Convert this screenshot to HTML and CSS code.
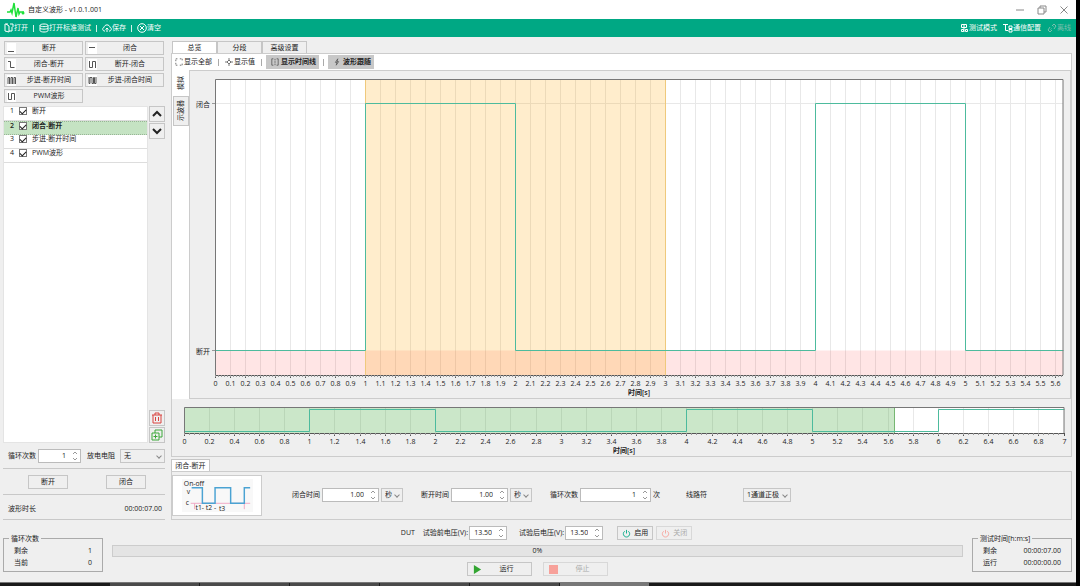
FILE: index.html
```html
<!doctype html>
<html lang="zh-CN">
    <head>
        <meta charset="utf-8" />
        <title>自定义波形 - v1.0.1.001</title>
        <link rel="stylesheet" href="styles.css">
    </head>

    <body>
        <header class="titlebar">
            <svg class="logo" viewBox="0 0 18 16">
                <path d="M0 10h3l1-2 1 3L7 1l2 14 2-9 1 6 1-2h4" />
                <circle cx="16" cy="11" r="1.5" />
            </svg>
            <h1>自定义波形 - v1.0.1.001</h1>
            <div class="window-buttons">
                <button aria-label="最小化">
                    <svg viewBox="0 0 10 10"><path d="M1 5h8" /></svg>
                </button>
                <button aria-label="还原">
                    <svg viewBox="0 0 10 10">
                        <path d="M1 3h6v6H1zM3 3V1h6v6H7" />
                    </svg>
                </button>
                <button aria-label="关闭">
                    <svg viewBox="0 0 10 10"><path d="M1.5 1.5l7 7M8.5 1.5l-7 7" /></svg>
                </button>
            </div>
        </header>

        <nav class="toolbar">
            <button>
                <svg viewBox="0 0 10 10"><path d="M4 1H1v7l4 1V3L2 1M5 8h3V4M6 1h3v3" /></svg>打开
            </button>
            <i></i>
            <button>
                <svg viewBox="0 0 10 10">
                    <path d="M1 2.5C1 .5 9 .5 9 2.5v5C9 9.5 1 9.5 1 7.5zM1 2.5C1 4 9 4 9 2.5M1 5c0 1.5 8 1.5 8 0" />
                </svg>打开标准测试
            </button>
            <i></i>
            <button>
                <svg viewBox="0 0 10 10"><path d="M3 8H2C0 7 .5 4.5 2 4.5 2.5 1 7.5 1 8 4.5c1.5 0 2 2.5 0 3.5H7M5 9V5M3.5 6.5L5 5l1.5 1.5" /></svg>保存
            </button>
            <i></i>
            <button>
                <svg viewBox="0 0 10 10"><circle cx="5" cy="5" r="4.3" /><path d="M3 3l4 4M7 3L3 7" /></svg>清空
            </button>
            <div class="toolbar-right">
                <button>
                    <svg viewBox="0 0 10 10"><path d="M2.5 1.5h5v3h-5zM5 1v8M2.5 6.5h2v2h-2zM6.5 6.5h2v2h-2z" /></svg>测试模式
                </button>
                <button>
                    <svg viewBox="0 0 10 10"><path d="M0 1.5h5M2.5 1.5v6H5M6 3h3v2.5H6zM6 6.5h3V9H6z" /></svg>通信配置
                </button>
                <button disabled>
                    <svg viewBox="0 0 10 10"><path d="M5 3l2-2 2 2-2 3M5 7L3 9 1 7l2-3M3.5 6.5l1-1M6 4l.5-.5" /></svg>离线
                </button>
            </div>
        </nav>

        <main>
            <aside class="sidebar">
                <div class="wave-buttons">
                    <button><svg viewBox="0 0 9 11"><path d="M1 8.5h6" /></svg><span>断开</span></button>
                    <button><svg viewBox="0 0 9 11"><path d="M1 4.5h6" /></svg><span>闭合</span></button>
                    <button><svg viewBox="0 0 9 11"><path d="M1 2.5h2.5v6h4" /></svg><span>闭合-断开</span></button>
                    <button><svg viewBox="0 0 9 11"><path d="M1.5 2v6.5h3v-6h3V9" /></svg><span>断开-闭合</span></button>
                    <button><svg viewBox="0 0 9 11"><path d="M1 9V2.5h1.5V9M4 9V2.5h1.5V9M7 9V2.5h1.5V9" /></svg><span>步进-断开时间</span></button>
                    <button><svg viewBox="0 0 9 11"><path d="M1 2v6.5h1V2.5h2v6h1.5v-6h1v6h1.5V2" /></svg><span>步进-闭合时间</span></button>
                    <button><svg viewBox="0 0 9 11"><path d="M1.5 2v6.5h3v-6h3V9" /></svg><span>PWM波形</span></button>
                </div>

                <div class="list-area">
                    <ol class="wave-list">
                        <li><span>1</span><input type="checkbox" id="w1" checked /><label for="w1">断开</label></li>
                        <li class="selected"><span>2</span><input type="checkbox" id="w2" checked /><label for="w2">闭合-断开</label></li>
                        <li><span>3</span><input type="checkbox" id="w3" checked /><label for="w3">步进-断开时间</label></li>
                        <li><span>4</span><input type="checkbox" id="w4" checked /><label for="w4">PWM波形</label></li>
                    </ol>
                    <div class="list-tools">
                        <button aria-label="上移"><svg viewBox="0 0 12 12"><path d="M2 8l4-4 4 4" /></svg></button>
                        <button aria-label="下移"><svg viewBox="0 0 12 12"><path d="M2 4l4 4 4-4" /></svg></button>
                        <button class="delete" aria-label="删除">
                            <svg viewBox="0 0 12 12"><path d="M1 3h10M4 3V1h4v2M2 3v8h8V3M4.5 5v4M7.5 5v4" /></svg>
                        </button>
                        <button class="copy" aria-label="复制">
                            <svg viewBox="0 0 12 12"><path d="M1 4h7v7H1zM4 4V1h7v7H8M4.5 5.5v4M2.5 7.5h4" /></svg>
                        </button>
                    </div>
                </div>

                <div class="cycle-row">
                    <label for="cycles">循环次数</label>
                    <div class="spin"><input type="number" id="cycles" value="1" /><svg viewBox="0 0 6 12"><path d="M1 4l2-2 2 2M1 8l2 2 2-2" /></svg></div>
                    <label for="resistor">放电电阻</label>
                    <div class="select"><select id="resistor"><option>无</option></select></div>
                </div>
                <div class="switch-row">
                    <button>断开</button>
                    <button>闭合</button>
                </div>
                <div class="duration-row">
                    <span>波形时长</span>
                    <span>00:00:07.00</span>
                </div>
            </aside>

            <section class="content">
                <div class="tabs">
                    <button class="active">总览</button>
                    <button>分段</button>
                    <button>高级设置</button>
                </div>
                <div class="overview">
                    <div class="view-tools">
                        <button><svg viewBox="0 0 10 10"><path stroke-dasharray="2 1" d="M1 4V1h3M6 1h3v3M1 6v3h3M6 9h3V6" /></svg>显示全部</button>
                        <i></i>
                        <button><svg viewBox="0 0 10 10"><path d="M5 0v3M5 7v3M0 5h3M7 5h3M5 2.5L7.5 5 5 7.5 2.5 5z" /></svg>显示值</button>
                        <i></i>
                        <button class="on"><svg viewBox="0 0 10 10"><path d="M3 1H1v8h2M7 1h2v8H7M5 1v2M5 4v2M5 7v2" /></svg>显示时间线</button>
                        <i></i>
                        <button class="on"><svg viewBox="0 0 10 10"><path d="M6 1L3 5.5h2L4 9l3-4.5H5z" /></svg>波形跟随</button>
                    </div>
                    <div class="scope">
                        <div class="side-tabs">
                            <button class="active">模拟</button>
                            <button>示波器</button>
                        </div>
                        <svg class="chart" id="mainChart"></svg>
                    </div>
                    <svg class="chart-overview" id="overviewChart"></svg>
                </div>

                <div class="tabs segment-tabs">
                    <button class="active">闭合-断开</button>
                </div>
                <div class="segment">
                    <svg class="preview" viewBox="0 0 90 40">
                        <rect x="9" y="3" width="73" height="34" />
                        <path class="base" d="M18 28h61M73 28v6M22 28v6" />
                        <path class="wave" d="M19 12h11v16h13V12h16v16h14V12h6" />
                        <text x="11" y="10">On-off</text>
                        <text x="14" y="18">v</text>
                        <text x="13" y="30">c</text>
                        <text x="23" y="35">t1- t2 -</text>
                        <text x="47" y="36">t3</text>
                    </svg>
                    <div class="fields">
                        <div class="field">
                            <label for="closeTime">闭合时间</label>
                            <div class="spin wide"><input type="number" id="closeTime" step="0.01" value="1.00" /><svg viewBox="0 0 6 12"><path d="M1 4l2-2 2 2M1 8l2 2 2-2" /></svg></div>
                            <div class="select unit"><select aria-label="闭合时间单位"><option>秒</option></select></div>
                        </div>
                        <div class="field">
                            <label for="openTime">断开时间</label>
                            <div class="spin wide"><input type="number" id="openTime" step="0.01" value="1.00" /><svg viewBox="0 0 6 12"><path d="M1 4l2-2 2 2M1 8l2 2 2-2" /></svg></div>
                            <div class="select unit"><select aria-label="断开时间单位"><option>秒</option></select></div>
                        </div>
                        <div class="field">
                            <label for="segCycles">循环次数</label>
                            <div class="spin widest"><input type="number" id="segCycles" value="1" /><svg viewBox="0 0 6 12"><path d="M1 4l2-2 2 2M1 8l2 2 2-2" /></svg></div>
                            <span>次</span>
                        </div>
                        <div class="field">
                            <label class="line-label" for="line">线路符</label>
                            <div class="select"><select id="line"><option>1通道正极</option></select></div>
                        </div>
                    </div>
                </div>
            </section>
        </main>

        <footer>
            <fieldset>
                <legend>循环次数</legend>
                <p><span>剩余</span><span>1</span></p>
                <p><span>当前</span><span>0</span></p>
            </fieldset>

            <div class="run-area">
                <div class="dut-row">
                    <span>DUT</span>
                    <div class="dut-field">
                        <label for="vBefore">试验前电压(V):</label>
                        <div class="spin"><input type="number" id="vBefore" step="0.01" value="13.50" /><svg viewBox="0 0 6 12"><path d="M1 4l2-2 2 2M1 8l2 2 2-2" /></svg></div>
                    </div>
                    <div class="dut-field after">
                        <label for="vAfter">试验后电压(V):</label>
                        <div class="spin"><input type="number" id="vAfter" step="0.01" value="13.50" /><svg viewBox="0 0 6 12"><path d="M1 4l2-2 2 2M1 8l2 2 2-2" /></svg></div>
                    </div>
                    <button class="power"><svg viewBox="0 0 10 10"><path d="M5 1v4M3 2.5a3.5 3.5 0 1 0 4 0" /></svg>启用</button>
                    <button class="power off" disabled><svg viewBox="0 0 10 10"><path d="M5 1v4M3 2.5a3.5 3.5 0 1 0 4 0" /></svg>关闭</button>
                </div>
                <div class="progress" role="progressbar" aria-valuenow="0">0%</div>
                <div class="run-row">
                    <button><svg viewBox="0 0 10 10"><path fill="#33a532" d="M1 0l8 5-8 5z" /></svg><span>运行</span></button>
                    <button disabled><svg viewBox="0 0 10 10"><path fill="#f7a19a" d="M0 0h10v10H0z" /></svg><span>停止</span></button>
                </div>
            </div>

            <fieldset>
                <legend>测试时间[h:m:s]</legend>
                <p><span>剩余</span><span>00:00:07.00</span></p>
                <p><span>运行</span><span>00:00:00.00</span></p>
            </fieldset>
        </footer>

        <div class="taskbar">
            <i></i><i></i><i></i><i></i><i></i><i class="current"></i>
        </div>

        <script src="charts.js"></script>
    </body>
</html>
```

FILE: styles.css
```css
* {
    box-sizing: border-box;
}
body {
    display: flex;
    flex-direction: column;
    min-height: 100vh;
    margin: 0;
    border-right: 4px solid #000;
    background: #efefef;
    color: #222;
    font: 7px/10px "Open Sans", "Noto Sans CJK SC", sans-serif;
}
button,
input,
select {
    margin: 0;
    padding: 0;
    border: 1px solid #c6c6c6;
    border-radius: 0;
    background: #efefef;
    color: inherit;
    font: inherit;
}
svg {
    flex: none;
    fill: none;
    stroke: currentColor;
}

/* title bar */
.titlebar {
    display: flex;
    align-items: center;
    height: 19px;
    padding: 0 7px;
    background: #fff;
}
.logo {
    width: 18px;
    height: 16px;
    color: #1fe03a;
    stroke-width: 1.5;
}
.logo circle {
    fill: #1fe03a;
    stroke: none;
}
h1 {
    flex: 1;
    margin: 0 0 0 3px;
    font-size: 7px;
    font-weight: 400;
}
.window-buttons {
    display: flex;
    gap: 12px;
}
.window-buttons button {
    width: 10px;
    height: 10px;
    border: 0;
    background: none;
    color: #888;
}
.window-buttons svg {
    display: block;
    width: 10px;
    height: 10px;
}

/* green toolbar */
.toolbar {
    display: flex;
    align-items: center;
    height: 18px;
    padding: 0 5px 0 4px;
    background: #00a884;
    color: #fff;
}
.toolbar button {
    display: flex;
    align-items: center;
    border: 0;
    background: none;
}
.toolbar svg {
    width: 10px;
    height: 10px;
}
.toolbar > i {
    width: 1px;
    height: 7px;
    margin: 0 5px;
    background: #d5f2ea;
}
.toolbar-right {
    display: flex;
    gap: 6px;
    margin-left: auto;
}
.toolbar button:disabled {
    color: #7dbfae;
}

main {
    display: flex;
    flex: 1;
    gap: 6px;
    padding: 4px 4px 0 3px;
}

/* left side */
.sidebar {
    display: flex;
    flex-direction: column;
    width: 162px;
}
.wave-buttons {
    display: grid;
    grid-template-columns: 1fr 1fr;
    gap: 2px;
    padding: 0 1px;
}
.wave-buttons button {
    display: flex;
    align-items: center;
    height: 14px;
    padding-left: 2px;
}
.wave-buttons svg {
    width: 9px;
    height: 11px;
    background: #fff;
    color: #555;
}
.wave-buttons span {
    flex: 1;
    text-align: center;
}
.list-area {
    display: flex;
    flex: 1;
    gap: 1px;
    margin-top: 3px;
}
.wave-list {
    flex: 1;
    margin: 0;
    padding: 0;
    border: 1px solid #e4e4e4;
    background: #fff;
    list-style: none;
}
.wave-list li {
    display: flex;
    align-items: center;
    height: 14px;
    padding-bottom: 5px;
    border-bottom: 1px solid #ddd;
}
.wave-list li.selected {
    border-top: 1px dotted #98b596;
    border-bottom: 1px dotted #98b596;
    background: #c5e3c3;
    font-weight: 600;
}
.wave-list span {
    width: 15px;
    padding-right: 5px;
    text-align: right;
}
.wave-list label {
    margin-left: 5px;
}
.wave-list input {
    display: grid;
    place-items: center;
    width: 8px;
    height: 8px;
    border: 1px solid #777;
    background: #fff;
    appearance: none;
}
.wave-list input:checked::before {
    content: "";
    width: 5px;
    height: 3px;
    border: solid #222;
    border-width: 0 0 1px 1px;
    transform: rotate(-45deg);
}
.list-tools {
    display: flex;
    flex-direction: column;
    gap: 1px;
    width: 16px;
}
.list-tools button {
    display: grid;
    place-items: center;
    height: 16px;
}
.list-tools svg {
    width: 12px;
    height: 12px;
    stroke-width: 2;
}
.list-tools .delete {
    margin-top: auto;
    color: #d9433f;
}
.list-tools .copy {
    color: #3da83b;
}
.list-tools .delete svg,
.list-tools .copy svg {
    stroke-width: 1;
}
.cycle-row,
.switch-row,
.duration-row {
    display: flex;
    align-items: center;
    border-bottom: 1px solid #c8c8c8;
}
.cycle-row {
    height: 26px;
    padding-left: 5px;
}
.cycle-row label + .spin {
    margin: 0 6px 0 2px;
}
.cycle-row .select {
    flex: 1;
    margin-left: 5px;
}
.switch-row {
    justify-content: space-between;
    height: 26px;
    padding: 0 19px 0 25px;
}
.switch-row button {
    width: 40px;
    height: 14px;
}
.duration-row {
    justify-content: space-between;
    height: 25px;
    padding: 4px 3px 0 5px;
}

/* number boxes and drop-downs */
.spin {
    display: flex;
    align-items: center;
    width: 43px;
    height: 14px;
    padding-right: 2px;
    border: 1px solid #bbb;
    background: #fff;
}
.spin.wide {
    width: 57px;
}
.spin.widest {
    width: 71px;
}
.spin input {
    flex: 1;
    min-width: 0;
    padding-right: 6px;
    border: 0;
    background: none;
    text-align: right;
    appearance: textfield;
}
.spin input::-webkit-inner-spin-button {
    display: none;
}
.spin svg {
    width: 6px;
    height: 12px;
    color: #999;
}
.select {
    position: relative;
}
.select select {
    display: block;
    width: 100%;
    height: 14px;
    padding: 0 10px 0 3px;
    appearance: none;
}
.select::after {
    content: "";
    position: absolute;
    top: 5px;
    right: 4px;
    width: 3px;
    height: 3px;
    border: solid #888;
    border-width: 0 1px 1px 0;
    transform: rotate(45deg);
    pointer-events: none;
}

/* right side */
.content {
    display: flex;
    flex: 1;
    flex-direction: column;
    min-width: 0;
}
.tabs {
    display: flex;
    padding-left: 1px;
}
.tabs button {
    width: 45px;
    height: 12px;
    border-bottom: 0;
    line-height: 10px;
}
.tabs .active {
    background: #fff;
}
.overview {
    display: flex;
    flex: 1;
    flex-direction: column;
    border: 1px solid #ccc;
    background: #fff;
}
.view-tools {
    display: flex;
    align-items: center;
    height: 16px;
    padding-left: 1px;
}
.view-tools button {
    display: flex;
    align-items: center;
    height: 14px;
    padding: 0 2px;
    border: 0;
    background: none;
}
.view-tools svg {
    width: 8px;
    height: 8px;
    margin-right: 1px;
    color: #555;
}
.view-tools .on {
    padding: 0 3px 0 5px;
    background: #c8c8c8;
    font-weight: 600;
}
.view-tools .on svg {
    margin-right: 2px;
}
.view-tools i {
    width: 1px;
    height: 7px;
    margin: 0 4px;
    background: #aaa;
}
.scope {
    display: flex;
    flex: 1;
}
.side-tabs {
    width: 17px;
}
.side-tabs button {
    display: block;
    width: 16px;
    height: 30px;
    margin-left: 1px;
    writing-mode: vertical-rl;
    text-orientation: sideways;
    transform: rotate(180deg);
}
.side-tabs .active {
    height: 26px;
    border-color: #fff;
    background: #fff;
}
.chart {
    flex: 1;
    min-width: 0;
    height: auto;
    min-height: 200px;
    border: 1px solid #ccc;
    background: #efefef;
}
.chart-overview {
    width: 100%;
    height: 57px;
    background: #efefef;
}
.chart text,
.chart-overview text {
    fill: #222;
    stroke: none;
    text-anchor: middle;
}
.segment-tabs {
    margin-top: 2px;
    padding-left: 0;
}
.segment-tabs button {
    width: 39px;
}
.segment {
    display: flex;
    height: 49px;
    border: 1px solid #ccc;
    padding-top: 3px;
}
.preview {
    width: 90px;
    height: 41px;
    border: 1px solid #ccc;
    background: #fff;
    line-height: 7px;
}
.preview rect {
    fill: #f8f8f8;
    stroke: none;
}
.preview .base {
    stroke: #f0a8c4;
}
.preview .wave {
    stroke: #4ba3d3;
    stroke-width: 1.5;
}
.preview text {
    fill: #222;
    stroke: none;
}
.fields {
    display: flex;
    gap: 18px;
    margin: 13px 0 0 30px;
}
.field {
    display: flex;
    align-items: center;
    gap: 2px;
    height: 14px;
}
.field .unit {
    width: 22px;
}
.unit select {
    padding: 0 8px 0 3px;
}
.line-label {
    margin: 0 34px 0 8px;
}

/* bottom area */
footer {
    display: flex;
    align-items: flex-start;
    gap: 9px;
    height: 62px;
    padding: 6px 4px 0 3px;
}
fieldset {
    width: 100px;
    height: 38px;
    margin: 8px 0 0;
    padding: 2px 10px 0;
    border: 1px solid #aaa;
}
legend {
    margin-left: -5px;
    padding: 0 2px;
    line-height: 9px;
    white-space: nowrap;
}
fieldset p {
    display: flex;
    justify-content: space-between;
    margin: 0;
    line-height: 12px;
}
.run-area {
    flex: 1;
}
.dut-row,
.run-row {
    display: flex;
    justify-content: center;
}
.dut-row {
    gap: 8px;
    height: 14px;
    padding-left: 18px;
    line-height: 14px;
}
.dut-field {
    display: flex;
    gap: 1px;
}
.dut-field.after {
    margin-left: 4px;
}
.dut-field .spin {
    width: 38px;
}
.power {
    display: flex;
    align-items: center;
    gap: 3px;
    width: 36px;
    margin-left: 6px;
    padding-left: 4px;
}
.power svg {
    width: 9px;
    height: 9px;
    color: #00a884;
}
.power.off {
    margin-left: -5px;
}
.power.off svg {
    color: #f7a19a;
}
footer button:disabled {
    border-color: #d8d8d8;
    color: #aaa;
}
.progress {
    height: 12px;
    margin: 5px 0;
    border: 1px solid #ccc;
    background: #e4e4e4;
    text-align: center;
}
.run-row {
    gap: 11px;
}
.run-row button {
    display: flex;
    align-items: center;
    width: 65px;
    height: 14px;
    padding: 0 0 0 5px;
}
.run-row svg {
    width: 9px;
    height: 9px;
    stroke: none;
}
.run-row span {
    flex: 1;
    text-align: center;
}
.taskbar {
    display: flex;
    gap: 1px;
    height: 4px;
    padding-left: 110px;
    border-top: 1px solid #777;
    background: #1a1a1a;
}
.taskbar i {
    width: 89px;
    background: #4a4a4a;
}
.taskbar .current {
    background: #777;
}
```

FILE: charts.js
```js
const SVG_NS = "http://www.w3.org/2000/svg";

// [time, level] at every switch, level 1 = closed
const wave = [[0, 0], [1, 1], [2, 0], [4, 1], [5, 0], [6, 1], [7, 1]];
const visible = 5.65;

function add(svg, name, attrs, text) {
    const el = document.createElementNS(SVG_NS, name);
    for (const key in attrs) el.setAttribute(key, attrs[key]);
    if (text) el.textContent = text;
    svg.appendChild(el);
}

function line(svg, x1, y1, x2, y2, stroke) {
    add(svg, "path", { d: `M${x1} ${y1}L${x2} ${y2}`, stroke: stroke });
}

function drawChart(svg, o) {
    svg.replaceChildren();
    const right = svg.clientWidth - o.right;
    const bottom = svg.clientHeight - o.bottom;
    const w = right - o.left;
    const h = bottom - o.top;
    const px = (t) => Math.floor(o.left + (t / o.end) * w) + 0.5;
    const high = o.top + o.highPad + 0.5;
    const low = bottom - o.lowPad + 0.5;

    add(svg, "rect", { x: o.left, y: o.top, width: w, height: h, fill: "#fff", stroke: "none" });
    const steps = Math.floor(o.end / o.step + 0.001);
    for (let i = 0; i <= steps; i++) {
        line(svg, px(i * o.step), o.top, px(i * o.step), bottom, "#e8e8e8");
    }
    o.under(svg, px, o.top, bottom, low, right);

    let d = "";
    let level = low;
    for (const [t, v] of wave) {
        const x = px(Math.min(t, o.end));
        const next = v ? high : low;
        d += d ? `H${x}` : `M${x} ${level}`;
        if (t > o.end) break;
        d += `V${next}`;
        level = next;
    }
    add(svg, "path", { d: d, stroke: "#4dbb9d" });

    // frame and axis
    add(svg, "path", { d: `M${o.left + 0.5} ${bottom}V${o.top + 0.5}H${right}V${bottom}`, stroke: "#777" });
    line(svg, o.left, bottom + 0.5, right, bottom + 0.5, "#555");
    for (let i = 0; i <= steps; i++) {
        const x = px(i * o.step);
        line(svg, x, bottom, x, bottom + 3, "#555");
        add(svg, "text", { x: x, y: bottom + 11 }, String(Math.round(i * o.step * 10) / 10));
    }
    for (let t = 0; t < o.end; t += o.step / 5) {
        line(svg, px(t), bottom, px(t), bottom + 2, "#999");
    }
    add(svg, "text", { x: o.left + w / 2, y: bottom + o.titleGap, "font-weight": 600 }, "时间[s]");
    if (o.levels) {
        add(svg, "text", { x: o.left - 12, y: high + 3 }, "闭合");
        add(svg, "text", { x: o.left - 12, y: low + 3 }, "断开");
        line(svg, o.left - 3, high, o.left, high, "#999");
        line(svg, o.left - 3, low, o.left, low, "#999");
    }
}

function drawAll() {
    drawChart(document.getElementById("mainChart"), {
        left: 25, right: 7, top: 8, bottom: 23, end: visible, step: 0.1,
        highPad: 24, lowPad: 25, titleGap: 20, levels: true,
        under(svg, px, top, bottom, low, right) {
            const x1 = px(1);
            const x2 = px(3);
            line(svg, px(0), top + 24.5, right, top + 24.5, "#e8e8e8");
            add(svg, "rect", { x: px(0), y: low, width: right - px(0), height: bottom - low, fill: "#ff0000", "fill-opacity": 0.1, stroke: "none" });
            add(svg, "rect", { x: x1, y: top, width: x2 - x1, height: bottom - top, fill: "#ffa500", "fill-opacity": 0.2, stroke: "none" });
            line(svg, x1, top, x1, bottom, "#efc97c");
            line(svg, x2, top, x2, bottom, "#efc97c");
        },
    });
    drawChart(document.getElementById("overviewChart"), {
        left: 12, right: 7, top: 8, bottom: 23, end: 7, step: 0.2,
        highPad: 2, lowPad: 2, titleGap: 20,
        under(svg, px, top, bottom) {
            add(svg, "rect", { x: px(0), y: top, width: px(visible) - px(0), height: bottom - top, fill: "#46a83c", "fill-opacity": 0.28, stroke: "none" });
            line(svg, px(visible), top, px(visible), bottom, "#76b772");
        },
    });
}

drawAll();
window.addEventListener("resize", drawAll);
```
